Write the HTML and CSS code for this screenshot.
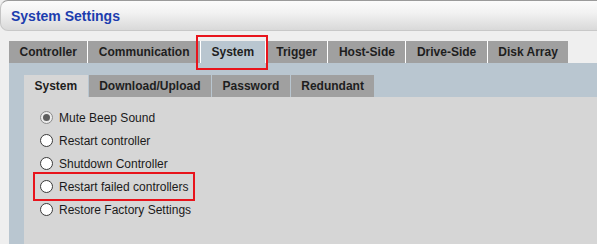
FILE: index.html
```html
<!DOCTYPE html>
<html lang="en">
<head>
    <meta charset="UTF-8">
    <meta name="viewport" content="width=device-width, initial-scale=1.0">
    <title>System Settings</title>

    <link rel="stylesheet" href="styles.css">
</head>
<body>
    <div class="header">
        <h1>System Settings</h1>
    </div>
    <div class="main">
        <ul class="tabs">
            <li>Controller</li>
            <li>Communication</li>
            <li class="active marked">System</li>
            <li>Trigger</li>
            <li>Host-Side</li>
            <li>Drive-Side</li>
            <li>Disk Array</li>
        </ul>
        <div class="panel">
            <ul class="subtabs">
                <li class="active">System</li>
                <li>Download/Upload</li>
                <li>Password</li>
                <li>Redundant</li>
            </ul>
            <div class="content">
                <ul class="options">
                    <li><span class="opt"><span class="radio checked"></span>Mute Beep Sound</span></li>
                    <li><span class="opt"><span class="radio"></span>Restart controller</span></li>
                    <li><span class="opt"><span class="radio"></span>Shutdown Controller</span></li>
                    <li><span class="opt marked"><span class="radio"></span>Restart failed controllers</span></li>
                    <li><span class="opt"><span class="radio"></span>Restore Factory Settings</span></li>
                </ul>
            </div>
        </div>
    </div>
</body>
</html>
```

FILE: styles.css
```css
* {
    margin: 0;
    padding: 0;
    box-sizing: border-box;
}
html, body {
    height: 100%;
}
body {
    font-family: 'Liberation Sans', Arial, sans-serif;
    background: #efefef;
    color: #1a1a1a;
    display: flex;
    flex-direction: column;
    overflow: hidden;
}
.header {
    height: 31px;
    background: linear-gradient(#fbfbfb, #f2f2f2 40%, #d9d9d9);
    border-top: 1px solid #9a9a9a;
    border-left: 1px solid #c4c4c4;
    border-bottom: 1px solid #c8c8c8;
    border-radius: 8px 0 0 8px;
    display: flex;
    align-items: center;
    padding-left: 10px;
}
h1 {
    font-size: 14px;
    font-weight: bold;
    color: #1c3dae;
}
.main {
    flex: 1;
    display: flex;
    flex-direction: column;
    padding: 10px 0 0 9px;
}
ul {
    list-style: none;
}
.tabs, .subtabs {
    display: flex;
}
.tabs li, .subtabs li {
    height: 22px;
    line-height: 22px;
    padding: 0 10.5px;
    font-size: 12px;
    font-weight: bold;
    background: #a0a0a0;
    color: #1e1e1e;
    white-space: nowrap;
}
.tabs li + li {
    border-left: 1px solid #fff;
}
.tabs li.active {
    background: #b9c6d0;
}
.subtabs li + li {
    margin-left: 1px;
}
.subtabs li.active {
    background: #d6d6d6;
}
.marked {
    position: relative;
}
.marked::after {
    content: "";
    position: absolute;
    border: 2px solid #e8141c;
}
.tabs .marked::after {
    left: -5px;
    right: -3px;
    top: -6px;
    bottom: -7px;
}
.panel {
    flex: 1;
    display: flex;
    flex-direction: column;
    background: #b9c6d0;
    padding: 12px 0 0 15px;
}
.content {
    flex: 1;
    background: #d6d6d6;
    padding: 9px 0 0 16px;
}
.options li {
    height: 23px;
    display: flex;
    align-items: center;
}
.opt {
    display: inline-flex;
    align-items: center;
    font-size: 12px;
    color: #1a1a1a;
}
.opt.marked::after {
    left: -7px;
    right: -7px;
    top: -8px;
    bottom: -7px;
}
.radio {
    width: 13px;
    height: 13px;
    border: 1px solid #3a3a3a;
    border-radius: 50%;
    background: #fff;
    margin-right: 6px;
    display: flex;
    align-items: center;
    justify-content: center;
}
.radio.checked {
    border-color: #8a8a8a;
    background: #ececec;
}
.radio.checked::before {
    content: "";
    width: 7px;
    height: 7px;
    border-radius: 50%;
    background: #5e5e5e;
}
```
